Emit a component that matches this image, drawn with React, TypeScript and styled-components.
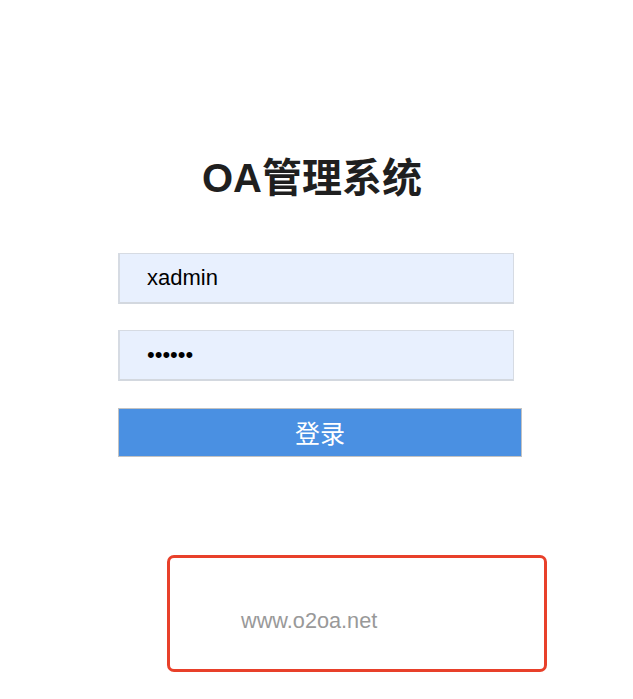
import React from "react";
import styled, { createGlobalStyle } from "styled-components";

const GlobalStyle = createGlobalStyle`
  html, body {
    margin: 0;
    padding: 0;
    background: #ffffff;
  }
  body {
    font-family: "Liberation Sans", "Noto Sans CJK SC", sans-serif;
  }
  * { box-sizing: border-box; }
`;

const Page = styled.div`
  width: 633px;
  min-height: 699px;
  padding-top: 158px;
  display: flex;
  flex-direction: column;
`;

const Form = styled.form`
  width: 404px;
  margin-left: 118px;
  display: flex;
  flex-direction: column;
`;

const Title = styled.h1`
  margin: 0 0 0 84px;
  font-family: "Liberation Sans", "Noto Sans CJK SC", sans-serif;
  font-size: 40px;
  font-weight: 700;
  line-height: 40px;
  color: #1f1f1f;
  white-space: nowrap;
`;

const Input = styled.input<{ $gap: number }>`
  width: 396px;
  height: 51px;
  margin: ${(p) => p.$gap}px 0 0 0;
  padding: 0 0 0 27px;
  font-family: "Liberation Sans", sans-serif;
  font-size: 22px;
  color: #000;
  background: #e8f0fe;
  border: 1px solid #d6dbe3;
  border-left-width: 2px;
  border-bottom: 2px solid #d3d8df;
  outline: none;
  &::placeholder { color: #999; }
`;

const Button = styled.button`
  width: 404px;
  height: 49px;
  margin-top: 27px;
  padding: 0;
  background: #4a90e2;
  border: 1px solid #c2c2c2;
  color: #ffffff;
  font-family: "Noto Sans CJK SC", sans-serif;
  font-size: 25px;
  line-height: 1;
  cursor: pointer;
`;

const Footer = styled.div`
  width: 380px;
  height: 117px;
  margin: 98px 0 0 167px;
  padding: 51px 0 0 71px;
  border: 3px solid #e8402a;
  border-radius: 7px;
`;

const Site = styled.div`
  font-family: "Liberation Sans", sans-serif;
  font-size: 21.7px;
  line-height: 24px;
  color: #999999;
`;

export default function App() {
  return (
    <>
      <GlobalStyle />
      <Page>
        <Form onSubmit={(e) => e.preventDefault()}>
          <Title>OA管理系统</Title>
          <Input $gap={55} type="text" defaultValue="xadmin" />
          <Input $gap={26} type="password" defaultValue="123456" />
          <Button type="submit">登录</Button>
        </Form>
        <Footer>
          <Site>www.o2oa.net</Site>
        </Footer>
      </Page>
    </>
  );
}
